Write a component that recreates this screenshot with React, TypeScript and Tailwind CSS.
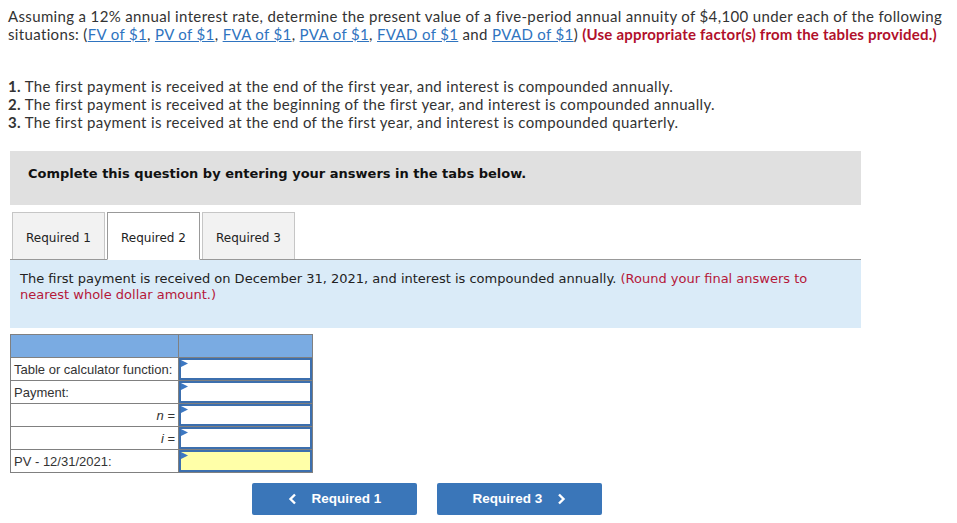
import React from "react";

const links = ["FV of $1", "PV of $1", "FVA of $1", "PVA of $1", "FVAD of $1"];

const rows = [
  { label: "Table or calculator function:", right: false, yellow: false },
  { label: "Payment:", right: false, yellow: false },
  { label: "n =", right: true, yellow: false },
  { label: "i =", right: true, yellow: false },
  { label: "PV - 12/31/2021:", right: false, yellow: true },
];

const Marker = () => (
  <svg className="absolute left-0 top-0" width="7" height="7" viewBox="0 0 7 7">
    <path d="M0 0 L7 3.5 L0 7 Z" fill="#3d78c2" />
  </svg>
);

const App: React.FC = (): JSX.Element => {
  return (
    <div className="w-[957px] h-[523px] bg-white overflow-hidden text-[#333]">
      <div className="px-[8px] pt-[7px] font-['Lato',sans-serif] text-[15px] leading-[18px] tracking-[0.35px]">
        <p>
          Assuming a 12% annual interest rate, determine the present value of a five-period annual
          annuity of $4,100 under each of the following situations:{" "}
          (
          {links.map((l, i) => (
            <React.Fragment key={l}>
              <a className="text-[#2f74c0] underline">{l}</a>
              {i < links.length - 1 ? ", " : " and "}
            </React.Fragment>
          ))}
          <a className="text-[#2f74c0] underline">PVAD of $1</a>){" "}
          <b className="text-[#b1102b] tracking-[0.2px]">(Use appropriate factor(s) from the tables provided.)</b>
        </p>
        <ol className="mt-[34px]">
          <li>
            <b>1.</b> The first payment is received at the end of the first year, and interest is
            compounded annually.
          </li>
          <li>
            <b>2.</b> The first payment is received at the beginning of the first year, and interest
            is compounded annually.
          </li>
          <li>
            <b>3.</b> The first payment is received at the end of the first year, and interest is
            compounded quarterly.
          </li>
        </ol>
      </div>

      <div className="ml-[10px] w-[851px] font-['DejaVu_Sans',Verdana,sans-serif]">
        <div className="mt-[20px] h-[54px] bg-[#e0e0e0] pl-[18px] pt-[15px] leading-[16px] text-[13px] font-bold text-[#111]">
          Complete this question by entering your answers in the tabs below.
        </div>

        <div className="mt-[7px] flex gap-[2px] pl-[2px] border-b border-[#999] text-[12px] text-[#222]">
          {["Required 1", "Required 2", "Required 3"].map((t, i) => (
            <div
              key={t}
              className={
                i === 1
                  ? "w-[93px] h-[48px] -mb-px pt-[3px] flex items-center justify-center bg-white border border-[#999] border-b-white"
                  : "w-[93px] h-[47px] pt-[3px] flex items-center justify-center bg-[#f2f2f2] border border-[#c6c6c6] border-b-0"
              }
            >
              {t}
            </div>
          ))}
        </div>

        <div className="h-[68px] bg-[#daebf8] px-[10px] pt-[11px] text-[13px] leading-[16px] text-[#222]">
          The first payment is received on December 31, 2021, and interest is compounded annually.{" "}
          <span className="text-[#b5183a]">(Round your final answers to nearest whole dollar amount.)</span>
        </div>
      </div>

      <table className="ml-[10px] mt-[6px] border-collapse font-['Liberation_Sans',Arial,sans-serif] text-[13px] text-[#333]">
        <tbody>
          <tr>
            <td className="w-[168px] h-[23px] bg-[#7aabe2] border border-[#808080]" />
            <td className="w-[134px] h-[23px] bg-[#7aabe2] border border-[#808080]" />
          </tr>
          {rows.map((r) => (
            <tr key={r.label}>
              <td className={`h-[23px] px-[3px] leading-[15px] border border-[#808080] ${r.right ? "text-right" : ""}`}>
                {r.right ? (
                  <>
                    <i>{r.label.split(" ")[0]}</i> =
                  </>
                ) : (
                  r.label
                )}
              </td>
              <td className="h-[23px] p-0 border border-[#808080]">
                <div
                  className={`relative h-[22px] border-2 border-[#3c6fae] ${r.yellow ? "bg-[#ffffa8]" : "bg-white"}`}
                >
                  <Marker />
                </div>
              </td>
            </tr>
          ))}
        </tbody>
      </table>

      <div className="mt-[10px] pl-[252px] flex gap-[20px] font-['Liberation_Sans',Arial,sans-serif] text-[13.5px] font-bold text-white">
        <button className="w-[165px] h-[32px] bg-[#3a76b9] rounded-[2px] flex items-center justify-center gap-[15px]">
          <svg width="9" height="12" viewBox="0 0 9 12">
            <path d="M7 1.5 L2.5 6 L7 10.5" stroke="white" strokeWidth="2.4" fill="none" />
          </svg>
          Required 1
        </button>
        <button className="w-[165px] h-[32px] bg-[#3a76b9] rounded-[2px] flex items-center justify-center gap-[15px]">
          Required 3
          <svg width="9" height="12" viewBox="0 0 9 12">
            <path d="M2 1.5 L6.5 6 L2 10.5" stroke="white" strokeWidth="2.4" fill="none" />
          </svg>
        </button>
      </div>
    </div>
  );
};

export default App;
